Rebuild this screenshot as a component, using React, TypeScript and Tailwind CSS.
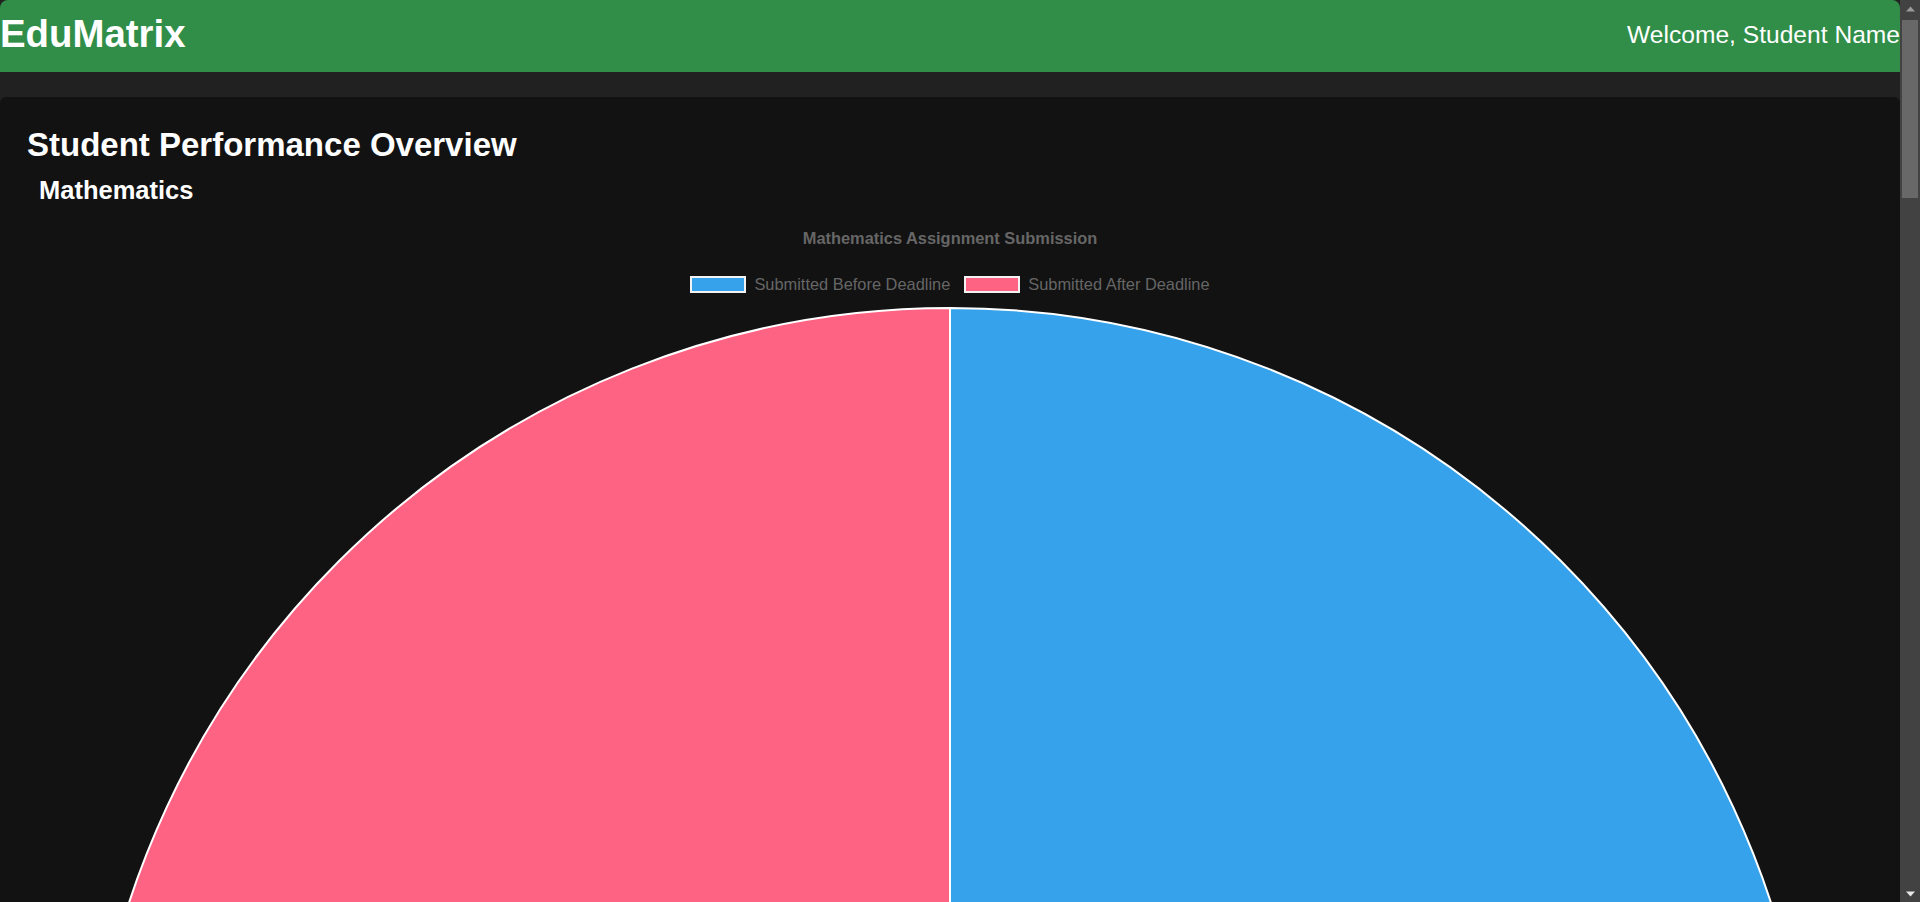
import React from 'react';

interface Subject {
  name: string;
  before: number;
  after: number;
}

const SUBJECTS: Subject[] = [
  { name: 'Mathematics', before: 1, after: 1 },
  { name: 'Science', before: 1, after: 1 },
];

const BLUE = '#36a2eb';
const PINK = '#ff6384';

const SIZE = 1730;

// Pie slices drawn clockwise from 12 o'clock, like Chart.js does
function Pie({ before, after }: { before: number; after: number }) {
  const c = SIZE / 2;
  const r = c - 1;
  const total = before + after;
  const slices = [
    { value: before, color: BLUE },
    { value: after, color: PINK },
  ];
  let start = -Math.PI / 2;
  return (
    <svg width={SIZE} height={SIZE} viewBox={`0 0 ${SIZE} ${SIZE}`} className="block shrink-0">
      {slices.map((s, i) => {
        const angle = (s.value / total) * Math.PI * 2;
        const end = start + angle;
        const x1 = c + r * Math.cos(start);
        const y1 = c + r * Math.sin(start);
        const x2 = c + r * Math.cos(end);
        const y2 = c + r * Math.sin(end);
        const large = angle > Math.PI ? 1 : 0;
        const d = `M ${c} ${c} L ${x1} ${y1} A ${r} ${r} 0 ${large} 1 ${x2} ${y2} Z`;
        start = end;
        return <path key={i} d={d} fill={s.color} stroke="#ffffff" strokeWidth={2} strokeLinejoin="bevel" />;
      })}
    </svg>
  );
}

function LegendItem({ color, label }: { color: string; label: string }) {
  return (
    <div className="flex items-center gap-[8px]">
      <span className="block w-[56px] h-[17px] border-2 border-[#f2f2f2]" style={{ backgroundColor: color }} />
      <span className="text-[16.4px] leading-[17px] text-[#666666]">{label}</span>
    </div>
  );
}

function SubjectChart({ subject }: { subject: Subject }) {
  return (
    <section className="flex flex-col">
      <h2 className="ml-[12px] text-[25.5px] leading-[30px] font-bold text-white">{subject.name}</h2>

      <div className="flex flex-col items-center">
        <div className="mt-[23px] text-[16.4px] leading-[20px] font-bold text-[#666666]">
          {subject.name} Assignment Submission
        </div>
        <div className="mt-[28px] flex items-center gap-[14px]">
          <LegendItem color={BLUE} label="Submitted Before Deadline" />
          <LegendItem color={PINK} label="Submitted After Deadline" />
        </div>
        <div className="mt-[14px]">
          <Pie before={subject.before} after={subject.after} />
        </div>
      </div>
    </section>
  );
}

// Classic dark scrollbar, as the browser draws it beside the page
function Scrollbar() {
  return (
    <div className="w-[20px] shrink-0 h-full flex flex-col bg-[#424242]">
      <div className="h-[17px] flex items-center justify-center">
        <svg width="9" height="6" viewBox="0 0 9 6">
          <path d="M0 5.5 L4.5 0.5 L9 5.5 Z" fill="#9a9a9a" />
        </svg>
      </div>
      <div className="mt-[3px] mx-[2px] h-[178px] bg-[#686868]" />
      <div className="flex-1" />
      <div className="h-[17px] flex items-center justify-center">
        <svg width="9" height="6" viewBox="0 0 9 6">
          <path d="M0 0.5 L4.5 5.5 L9 0.5 Z" fill="#e8e8e8" />
        </svg>
      </div>
    </div>
  );
}

export default function App() {
  return (
    <div
      className="h-screen flex bg-[#212121] text-white"
      style={{ fontFamily: '"Liberation Sans", Arial, Helvetica, sans-serif' }}
    >
      <div className="flex-1 min-w-0 h-full overflow-y-auto [scrollbar-width:none]">
        <header className="h-[72px] flex items-center justify-between bg-[#308e48] rounded-t-[8px]">
          <div className="pb-[4px] text-[38.4px] leading-none font-bold text-white">EduMatrix</div>
          <div className="pb-[2px] text-[24.6px] leading-none text-white">Welcome, Student Name</div>
        </header>

        <main className="mt-[25px] bg-[#121212] rounded-t-[6px] pl-[27px] pr-[27px] pt-[29px] pb-[26px]">
          <h1 className="text-[33px] leading-[37px] font-bold text-white">Student Performance Overview</h1>
          <div className="mt-[12px] flex flex-col gap-[14px]">
            {SUBJECTS.map((s) => (
              <SubjectChart key={s.name} subject={s} />
            ))}
          </div>
        </main>
      </div>
      <Scrollbar />
    </div>
  );
}
